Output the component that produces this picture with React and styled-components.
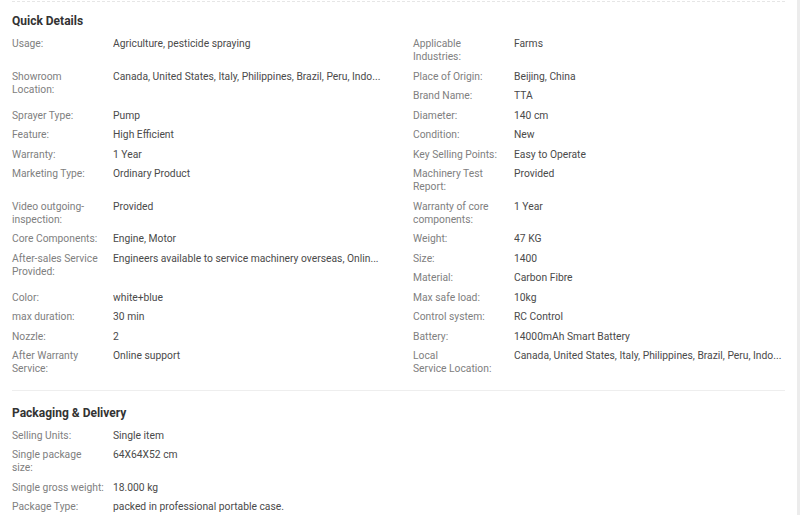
import React from "react";
import styled, { createGlobalStyle } from "styled-components";

const quickDetails = [
  ["Usage:", "Agriculture, pesticide spraying"],
  ["Applicable Industries:", "Farms"],
  ["Showroom Location:", "Canada, United States, Italy, Philippines, Brazil, Peru, Indo..."],
  ["Place of Origin:", "Beijing, China"],
  ["Brand Name:", "TTA"],
  ["Sprayer Type:", "Pump"],
  ["Diameter:", "140 cm"],
  ["Feature:", "High Efficient"],
  ["Condition:", "New"],
  ["Warranty:", "1 Year"],
  ["Key Selling Points:", "Easy to Operate"],
  ["Marketing Type:", "Ordinary Product"],
  ["Machinery Test Report:", "Provided"],
  ["Video outgoing-inspection:", "Provided"],
  ["Warranty of core components:", "1 Year"],
  ["Core Components:", "Engine, Motor"],
  ["Weight:", "47 KG"],
  ["After-sales Service Provided:", "Engineers available to service machinery overseas, Onlin..."],
  ["Size:", "1400"],
  ["Material:", "Carbon Fibre"],
  ["Color:", "white+blue"],
  ["Max safe load:", "10kg"],
  ["max duration:", "30 min"],
  ["Control system:", "RC Control"],
  ["Nozzle:", "2"],
  ["Battery:", "14000mAh Smart Battery"],
  ["After Warranty Service:", "Online support"],
  ["Local Service\u00a0Location:", "Canada, United States, Italy, Philippines, Brazil, Peru, Indo..."],
];

const packaging = [
  ["Selling Units:", "Single item"],
  ["Single package size:", "64X64X52 cm"],
  ["Single gross weight:", "18.000 kg"],
  ["Package Type:", "packed in professional portable case."],
];

const GlobalStyle = createGlobalStyle`
  html, body {
    margin: 0;
    padding: 0;
    background: #fff;
    overflow: hidden;
  }
  body {
    font-family: Roboto, "Liberation Sans", sans-serif;
  }
`;

const Page = styled.div`
  width: 797px;
  height: 515px;
  border-right: 3px solid #ececec;
  padding-top: 1px;
  overflow: hidden;
`;

const Section = styled.section`
  margin: 0 12px;
  border-top: 1px ${(p) => (p.dotted ? "dashed #e6e6e6" : "solid #eeeeee")};
  margin-bottom: ${(p) => p.gap || 0}px;
`;

const Title = styled.h3`
  margin: 0;
  padding-top: ${(p) => p.top || 11}px;
  margin-bottom: 5px;
  font-size: 12px;
  line-height: 16px;
  font-weight: 700;
  color: #333;
`;

const List = styled.div`
  width: 802px;
  &:after {
    content: "";
    display: block;
    clear: both;
  }
`;

const Item = styled.div`
  float: left;
  width: ${(p) => (p.full ? "100%" : "50%")};
  display: flex;
  padding: 3px 0 3.5px;
  font-size: 10.3px;
  line-height: 13px;
`;

const Label = styled.div`
  flex: 0 0 92px;
  padding-right: 9px;
  color: #808080;
`;

const Value = styled.div`
  flex: 1;
  color: #4a4a4a;
  white-space: nowrap;
  overflow: hidden;
`;

function Details({ rows, full }) {
  return (
    <List>
      {rows.map(([label, value]) => (
        <Item key={label} full={full}>
          <Label>{label}</Label>
          <Value>{value}</Value>
        </Item>
      ))}
    </List>
  );
}

export default function App() {
  return (
    <>
      <GlobalStyle />
      <Page>
        <Section dotted gap={11}>
          <Title>Quick Details</Title>
          <Details rows={quickDetails} />
        </Section>
        <Section>
          <Title top={14}>Packaging &amp; Delivery</Title>
          <Details rows={packaging} full />
        </Section>
      </Page>
    </>
  );
}
